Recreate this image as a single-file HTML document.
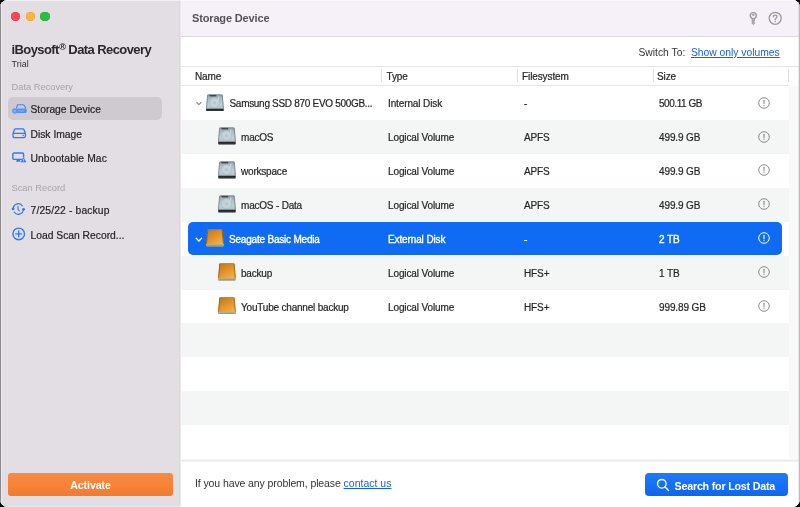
<!DOCTYPE html>
<html>
<head>
<meta charset="utf-8">
<title>iBoysoft Data Recovery</title>
<style>
*{box-sizing:border-box;margin:0;padding:0}
html,body{width:800px;height:507px;overflow:hidden;background:#000;}
body{font-family:"Liberation Sans",sans-serif;font-size:10px;color:#262626;position:relative;}
#win{position:absolute;left:0;top:0;width:800px;height:507px;border-radius:7.5px;overflow:hidden;background:#fff;will-change:transform;}
#sidebar{position:absolute;left:0;top:0;width:181px;height:507px;background:#e3dde4;border-left:1px solid #8d8a8e;border-right:1px solid #ebe7ec;box-shadow:inset -1px 0 0 #ddd7de, inset 1px 0 0 #ece7ed;}
#main{position:absolute;left:181px;top:0;width:618px;height:507px;background:#fff;}
#titlebar{position:absolute;left:0;top:0;width:618px;height:36px;background:#f6f1f8;}
#titlebar-line{position:absolute;left:0;top:36px;width:618px;height:1px;background:#dcd6dd;}
.tl{position:absolute;top:12px;width:9.3px;height:9.3px;border-radius:50%;}
.t{position:absolute;white-space:nowrap;line-height:12px;}
.apptitle{left:10.5px;top:42px;font-size:13px;font-weight:bold;color:#2a282b;line-height:16px;letter-spacing:-0.58px;}
.apptitle sup{font-size:9.5px;line-height:0;vertical-align:4.5px;}
.trial{left:10.5px;top:58px;font-size:9px;color:#333;}
.seclabel{font-size:9.3px;color:#a8a3a9;left:10.5px;}
.sel{position:absolute;left:7px;top:97px;width:154px;height:23px;border-radius:5px;background:#cfc9d0;}
.item{font-size:10.3px;color:#262426;left:29.5px;-webkit-text-stroke:0.2px currentColor;}
.ico{position:absolute;}
#activate{position:absolute;left:7px;top:473.4px;width:165px;height:23px;border-radius:3px;background:linear-gradient(#f78b45,#f47a2c);color:#fff;font-size:10.6px;font-weight:bold;text-align:center;line-height:24px;letter-spacing:-0.1px;}
.maintitle{left:11px;top:12px;font-size:11px;font-weight:bold;color:#545256;letter-spacing:-0.15px;}
.hline{position:absolute;left:0;height:1px;background:#e4e4e4;}
.row{position:absolute;left:0;width:608px;height:34px;}
.row.g{background:#f4f5f5;}
.hdr{font-size:10px;color:#262626;top:70.6px;letter-spacing:-0.1px;-webkit-text-stroke:0.2px currentColor;}
.vsep{position:absolute;top:69px;width:1px;height:13px;background:#dcdcdc;}
.c{position:absolute;white-space:nowrap;font-size:10px;line-height:12px;color:#262626;letter-spacing:-0.12px;-webkit-text-stroke:0.2px currentColor;}
.c.n{letter-spacing:-0.2px;}
.c.sz{letter-spacing:-0.12px;}
.selrow{position:absolute;left:7px;top:222px;width:594px;height:33px;border-radius:5px;background:#0f6bf3;}
.w{color:#fff !important;-webkit-text-stroke:0.35px #fff !important;}
.info{position:absolute;width:12px;height:12px;}
a{color:#1560e8;text-decoration:underline;}
#search{position:absolute;left:463.5px;top:473px;width:143.5px;height:23.4px;border-radius:4px;background:linear-gradient(#207af8,#0d66ee);color:#fff;font-size:11px;}
</style>
</head>
<body>
<div id="win">
  <div id="sidebar">
    <div class="tl" style="left:10.1px;background:#fd4655;box-shadow:inset 0 0 0 0.5px #e03a48"></div>
    <div class="tl" style="left:24.7px;background:#fcb43f;box-shadow:inset 0 0 0 0.5px #e0a030"></div>
    <div class="tl" style="left:39.3px;background:#27c13f;box-shadow:inset 0 0 0 0.5px #1faa34"></div>
    <div class="t apptitle">iBoysoft<sup>®</sup> Data Recovery</div>
    <div class="t trial">Trial</div>
    <div class="t seclabel" style="top:81px">Data Recovery</div>
    <div class="sel"></div>
    
<svg class="ico" style="left:9.7px;top:104px" width="17" height="11" viewBox="0 0 17 11"><path d="M5.4 4.6 L6.2 1.5 Q6.4 0.7 7.2 0.7 H12 Q12.8 0.7 13.2 1.4 L15 4.6" fill="none" stroke="#3f87f6" stroke-width="1.1"/><rect x="5.6" y="4.5" width="10.1" height="4.5" rx="1.5" fill="#4d90f5"/><rect x="7" y="5.7" width="6.5" height="2.2" rx="0.8" fill="#6aa3f6"/><circle cx="3.8" cy="7" r="2.7" fill="#5b99f5"/><circle cx="3.8" cy="7" r="1.3" fill="#7fb0f7"/></svg>
<svg class="ico" style="left:10.8px;top:127.8px" width="15" height="11" viewBox="0 0 15 11"><path d="M1 5.6 L2.5 1.6 Q2.8 0.8 3.7 0.8 H10.7 Q11.6 0.8 11.9 1.6 L13.4 5.6 V7.9 Q13.4 9.6 11.7 9.6 H2.7 Q1 9.6 1 7.9 Z" fill="none" stroke="#2b7bf6" stroke-width="1.3" stroke-linejoin="round"/><path d="M1.2 5.3H13.2" stroke="#2b7bf6" stroke-width="1.2"/><circle cx="11.2" cy="7.5" r="0.75" fill="#2b7bf6"/></svg>
<svg class="ico" style="left:11px;top:152px" width="16" height="11" viewBox="0 0 16 11"><rect x="0.8" y="1" width="10.8" height="6.4" rx="1.3" fill="none" stroke="#2b7bf6" stroke-width="1.4"/><path d="M5 7.8H7.6L8.8 9.7H3.8Z" fill="#2b7bf6"/><path d="M11.5 5.2 L14.7 10.4 H8.3 Z" fill="#e3dde4"/><path d="M11.5 6.1 L14 10 H9 Z" fill="#2b7bf6" stroke="#2b7bf6" stroke-width="0.6" stroke-linejoin="round"/><path d="M11.5 7.3V8.6" stroke="#fff" stroke-width="0.7"/><circle cx="11.5" cy="9.4" r="0.35" fill="#fff"/></svg>
<svg class="ico" style="left:9.8px;top:201.8px" width="15" height="14" viewBox="0 0 15 14"><path d="M2.3 6.2 A5 5 0 0 1 11.6 4.2" fill="none" stroke="#2b7bf6" stroke-width="1.2"/><path d="M12.3 7.8 A5 5 0 0 1 3 9.8" fill="none" stroke="#2b7bf6" stroke-width="1.2"/><circle cx="2.1" cy="6.9" r="1.4" fill="#2b7bf6"/><circle cx="12.6" cy="7.3" r="1.4" fill="#2b7bf6"/><path d="M7 4.2V7.4L8.3 8.9" fill="none" stroke="#2b7bf6" stroke-width="1.1" stroke-linecap="round"/></svg>
<svg class="ico" style="left:11px;top:226.5px" width="14" height="14" viewBox="0 0 14 14"><circle cx="6.7" cy="6.9" r="5.8" fill="none" stroke="#2b7bf6" stroke-width="1.4"/><path d="M6.7 4V9.8M3.8 6.9H9.6" stroke="#2b7bf6" stroke-width="1.4" stroke-linecap="round"/></svg>

    <div class="t item" style="top:104px">Storage Device</div>
    <div class="t item" style="top:128.5px">Disk Image</div>
    <div class="t item" style="top:153px;letter-spacing:0.1px">Unbootable Mac</div>
    <div class="t seclabel" style="top:182px">Scan Record</div>
    <div class="t item" style="top:205px;letter-spacing:0.15px">7/25/22 - backup</div>
    <div class="t item" style="top:229.5px">Load Scan Record...</div>
    <div id="activate">Activate</div>
  </div>
  <div id="main">
    <div id="titlebar"></div>
    <div id="titlebar-line"></div>
    <div class="t maintitle">Storage Device</div>
    <svg class="ico" style="left:567px;top:11px" width="10" height="15" viewBox="0 0 10 15"><circle cx="5.3" cy="4.6" r="3" fill="none" stroke="#9c999d" stroke-width="1.4"/><circle cx="5.3" cy="3.9" r="1.1" fill="#9c999d"/><path d="M4.2 7.4V12.4L5.3 13.6L6.4 12.4V11.4L5.7 10.8L6.4 10.1V7.4" fill="#b5b2b6" stroke="#9c999d" stroke-width="1"/></svg>
    <svg class="ico" style="left:587px;top:11px" width="15" height="15" viewBox="0 0 15 15"><circle cx="7.2" cy="7.3" r="6" fill="none" stroke="#9c999d" stroke-width="1.3"/><path d="M5.4 5.7Q5.4 4.1 7.2 4.1Q9 4.1 9 5.6Q9 6.6 8 7.2Q7.2 7.7 7.2 8.7" fill="none" stroke="#9c999d" stroke-width="1.3" stroke-linecap="round"/><circle cx="7.2" cy="10.4" r="0.75" fill="#9c999d"/></svg>
    <div class="t" style="left:457.5px;top:47px;font-size:10.3px;color:#333">Switch To:</div>
    <div class="t" style="left:510px;top:47px;font-size:10.3px;"><a>Show only volumes</a></div>
    <div class="hline" style="top:66px;width:618px"></div>
    <div class="t hdr" style="left:14px">Name</div>
    <div class="t hdr" style="left:205.5px">Type</div>
    <div class="t hdr" style="left:341px">Filesystem</div>
    <div class="t hdr" style="left:476px">Size</div>
    <div class="vsep" style="left:200px"></div>
    <div class="vsep" style="left:336px"></div>
    <div class="vsep" style="left:472px"></div>
    <div class="vsep" style="left:607px"></div>
    <div class="hline" style="top:85px;width:608px"></div>
    <div style="position:absolute;left:608px;top:86px;width:10px;height:374px;background:#f9f9f9"></div>
    <svg width="0" height="0" style="position:absolute"><defs>
<linearGradient id="gInt" x1="0" y1="0" x2="0" y2="1"><stop offset="0" stop-color="#7d8d95"/><stop offset="0.12" stop-color="#9aabb3"/><stop offset="0.35" stop-color="#b2c3cb"/><stop offset="0.6" stop-color="#bfcfd6"/><stop offset="1" stop-color="#a3b7c0"/></linearGradient>
<linearGradient id="gExt" x1="0.2" y1="0" x2="0.8" y2="1"><stop offset="0" stop-color="#c27a1d"/><stop offset="0.5" stop-color="#e4962e"/><stop offset="1" stop-color="#fdb840"/></linearGradient>
<linearGradient id="gBand" x1="0" y1="0" x2="0" y2="1"><stop offset="0" stop-color="#6a7276"/><stop offset="0.3" stop-color="#232527"/><stop offset="1" stop-color="#3c4043"/></linearGradient>
<linearGradient id="gBandE" x1="0" y1="0" x2="0" y2="1"><stop offset="0" stop-color="#bdb798"/><stop offset="1" stop-color="#8e8c7c"/></linearGradient>


</defs></svg>
    <div class="row" style="top:86.0px"></div>
<div class="row g" style="top:119.9px"></div>
<div class="row" style="top:153.8px"></div>
<div class="row g" style="top:187.7px"></div>
<div class="row" style="top:221.6px"></div>
<div class="row g" style="top:255.5px"></div>
<div class="row" style="top:289.4px"></div>
<div class="row g" style="top:323.3px"></div>
<div class="row" style="top:357.2px"></div>
<div class="row g" style="top:391.1px"></div>
<div class="row" style="top:425.0px"></div>
<div class="selrow"></div>
<svg class="ico" style="left:14px;top:101.4px" width="8" height="6" viewBox="0 0 8 6"><path d="M1.7 1.5 L3.9 3.7 L6.1 1.5" fill="none" stroke="#8a8a8a" stroke-width="1.1" stroke-linecap="round" stroke-linejoin="round"/></svg>
<svg class="ico" style="left:25.2px;top:93.5px" width="17.9" height="17.6" viewBox="0 0 17.5 17.5" preserveAspectRatio="none"><path d="M2.2 0.3H15.3Q16 0.3 16.1 1L17.3 14.6V16.6Q17.3 17.3 16.6 17.3H0.9Q0.2 17.3 0.2 16.6V14.6L1.4 1Q1.5 0.3 2.2 0.3Z" fill="url(#gInt)"/><path d="M1.6 1L0.4 14.6M15.9 1L17.1 14.6" stroke="#6f7d84" stroke-width="0.8" fill="none"/><path d="M0.2 14.3H17.3V16.6Q17.3 17.3 16.6 17.3H0.9Q0.2 17.3 0.2 16.6Z" fill="url(#gBand)"/><rect x="3.4" y="0.9" width="6.6" height="1.5" fill="#3f474b"/><circle cx="8.3" cy="8.6" r="4.9" fill="#c3d3d9" stroke="#a9bbc3" stroke-width="0.7"/><circle cx="8.3" cy="8.6" r="2.1" fill="#b7c7ce" stroke="#cddadf" stroke-width="0.5"/><path d="M12.6 2.6Q13.2 5.5 10.6 7.6" stroke="#d9e4e8" stroke-width="0.9" fill="none"/></svg>
<svg class="info" style="left:576.5px;top:96.6px" viewBox="0 0 12 12"><circle cx="6" cy="6" r="5.3" fill="none" stroke="#8a8a8a" stroke-width="1"/><path d="M6 3.2V6.8" stroke="#8a8a8a" stroke-width="1.1" stroke-linecap="round"/><circle cx="6" cy="8.6" r="0.65" fill="#8a8a8a"/></svg>
<svg class="ico" style="left:36.8px;top:127.4px" width="17.9" height="17.6" viewBox="0 0 17.5 17.5" preserveAspectRatio="none"><path d="M2.2 0.3H15.3Q16 0.3 16.1 1L17.3 14.6V16.6Q17.3 17.3 16.6 17.3H0.9Q0.2 17.3 0.2 16.6V14.6L1.4 1Q1.5 0.3 2.2 0.3Z" fill="url(#gInt)"/><path d="M1.6 1L0.4 14.6M15.9 1L17.1 14.6" stroke="#6f7d84" stroke-width="0.8" fill="none"/><path d="M0.2 14.3H17.3V16.6Q17.3 17.3 16.6 17.3H0.9Q0.2 17.3 0.2 16.6Z" fill="url(#gBand)"/><rect x="3.4" y="0.9" width="6.6" height="1.5" fill="#3f474b"/><circle cx="8.3" cy="8.6" r="4.9" fill="#c3d3d9" stroke="#a9bbc3" stroke-width="0.7"/><circle cx="8.3" cy="8.6" r="2.1" fill="#b7c7ce" stroke="#cddadf" stroke-width="0.5"/><path d="M12.6 2.6Q13.2 5.5 10.6 7.6" stroke="#d9e4e8" stroke-width="0.9" fill="none"/></svg>
<svg class="info" style="left:576.5px;top:130.5px" viewBox="0 0 12 12"><circle cx="6" cy="6" r="5.3" fill="none" stroke="#8a8a8a" stroke-width="1"/><path d="M6 3.2V6.8" stroke="#8a8a8a" stroke-width="1.1" stroke-linecap="round"/><circle cx="6" cy="8.6" r="0.65" fill="#8a8a8a"/></svg>
<svg class="ico" style="left:36.8px;top:161.3px" width="17.9" height="17.6" viewBox="0 0 17.5 17.5" preserveAspectRatio="none"><path d="M2.2 0.3H15.3Q16 0.3 16.1 1L17.3 14.6V16.6Q17.3 17.3 16.6 17.3H0.9Q0.2 17.3 0.2 16.6V14.6L1.4 1Q1.5 0.3 2.2 0.3Z" fill="url(#gInt)"/><path d="M1.6 1L0.4 14.6M15.9 1L17.1 14.6" stroke="#6f7d84" stroke-width="0.8" fill="none"/><path d="M0.2 14.3H17.3V16.6Q17.3 17.3 16.6 17.3H0.9Q0.2 17.3 0.2 16.6Z" fill="url(#gBand)"/><rect x="3.4" y="0.9" width="6.6" height="1.5" fill="#3f474b"/><circle cx="8.3" cy="8.6" r="4.9" fill="#c3d3d9" stroke="#a9bbc3" stroke-width="0.7"/><circle cx="8.3" cy="8.6" r="2.1" fill="#b7c7ce" stroke="#cddadf" stroke-width="0.5"/><path d="M12.6 2.6Q13.2 5.5 10.6 7.6" stroke="#d9e4e8" stroke-width="0.9" fill="none"/></svg>
<svg class="info" style="left:576.5px;top:164.4px" viewBox="0 0 12 12"><circle cx="6" cy="6" r="5.3" fill="none" stroke="#8a8a8a" stroke-width="1"/><path d="M6 3.2V6.8" stroke="#8a8a8a" stroke-width="1.1" stroke-linecap="round"/><circle cx="6" cy="8.6" r="0.65" fill="#8a8a8a"/></svg>
<svg class="ico" style="left:36.8px;top:195.2px" width="17.9" height="17.6" viewBox="0 0 17.5 17.5" preserveAspectRatio="none"><path d="M2.2 0.3H15.3Q16 0.3 16.1 1L17.3 14.6V16.6Q17.3 17.3 16.6 17.3H0.9Q0.2 17.3 0.2 16.6V14.6L1.4 1Q1.5 0.3 2.2 0.3Z" fill="url(#gInt)"/><path d="M1.6 1L0.4 14.6M15.9 1L17.1 14.6" stroke="#6f7d84" stroke-width="0.8" fill="none"/><path d="M0.2 14.3H17.3V16.6Q17.3 17.3 16.6 17.3H0.9Q0.2 17.3 0.2 16.6Z" fill="url(#gBand)"/><rect x="3.4" y="0.9" width="6.6" height="1.5" fill="#3f474b"/><circle cx="8.3" cy="8.6" r="4.9" fill="#c3d3d9" stroke="#a9bbc3" stroke-width="0.7"/><circle cx="8.3" cy="8.6" r="2.1" fill="#b7c7ce" stroke="#cddadf" stroke-width="0.5"/><path d="M12.6 2.6Q13.2 5.5 10.6 7.6" stroke="#d9e4e8" stroke-width="0.9" fill="none"/></svg>
<svg class="info" style="left:576.5px;top:198.3px" viewBox="0 0 12 12"><circle cx="6" cy="6" r="5.3" fill="none" stroke="#8a8a8a" stroke-width="1"/><path d="M6 3.2V6.8" stroke="#8a8a8a" stroke-width="1.1" stroke-linecap="round"/><circle cx="6" cy="8.6" r="0.65" fill="#8a8a8a"/></svg>
<svg class="ico" style="left:14px;top:237.0px" width="8" height="6" viewBox="0 0 8 6"><path d="M1.2 1.3 L3.9 4 L6.6 1.3" fill="none" stroke="#fff" stroke-width="1.35" stroke-linecap="round" stroke-linejoin="round"/></svg>
<svg class="ico" style="left:25.2px;top:229.1px" width="17.9" height="17.6" viewBox="0 0 17.5 17.5" preserveAspectRatio="none"><path d="M2.2 0.3H15.3Q16 0.3 16.1 1L17.3 14.8V16.6Q17.3 17.3 16.6 17.3H0.9Q0.2 17.3 0.2 16.6V14.8L1.4 1Q1.5 0.3 2.2 0.3Z" fill="url(#gExt)"/><path d="M1.7 0.8L0.5 14.8M15.8 0.8L17 14.8" stroke="#96590a" stroke-width="0.8" fill="none"/><path d="M1.8 0.6H15.7" stroke="#b8771c" stroke-width="0.6"/><path d="M0.2 14.9H17.3V16.6Q17.3 17.3 16.6 17.3H0.9Q0.2 17.3 0.2 16.6Z" fill="url(#gBandE)"/></svg>
<svg class="info" style="left:576.5px;top:232.2px" viewBox="0 0 12 12"><circle cx="6" cy="6" r="5.3" fill="none" stroke="#fff" stroke-width="1"/><path d="M6 3.2V6.8" stroke="#fff" stroke-width="1.1" stroke-linecap="round"/><circle cx="6" cy="8.6" r="0.65" fill="#fff"/></svg>
<svg class="ico" style="left:36.8px;top:263.0px" width="17.9" height="17.6" viewBox="0 0 17.5 17.5" preserveAspectRatio="none"><path d="M2.2 0.3H15.3Q16 0.3 16.1 1L17.3 14.8V16.6Q17.3 17.3 16.6 17.3H0.9Q0.2 17.3 0.2 16.6V14.8L1.4 1Q1.5 0.3 2.2 0.3Z" fill="url(#gExt)"/><path d="M1.7 0.8L0.5 14.8M15.8 0.8L17 14.8" stroke="#96590a" stroke-width="0.8" fill="none"/><path d="M1.8 0.6H15.7" stroke="#b8771c" stroke-width="0.6"/><path d="M0.2 14.9H17.3V16.6Q17.3 17.3 16.6 17.3H0.9Q0.2 17.3 0.2 16.6Z" fill="url(#gBandE)"/></svg>
<svg class="info" style="left:576.5px;top:266.1px" viewBox="0 0 12 12"><circle cx="6" cy="6" r="5.3" fill="none" stroke="#8a8a8a" stroke-width="1"/><path d="M6 3.2V6.8" stroke="#8a8a8a" stroke-width="1.1" stroke-linecap="round"/><circle cx="6" cy="8.6" r="0.65" fill="#8a8a8a"/></svg>
<svg class="ico" style="left:36.8px;top:296.9px" width="17.9" height="17.6" viewBox="0 0 17.5 17.5" preserveAspectRatio="none"><path d="M2.2 0.3H15.3Q16 0.3 16.1 1L17.3 14.8V16.6Q17.3 17.3 16.6 17.3H0.9Q0.2 17.3 0.2 16.6V14.8L1.4 1Q1.5 0.3 2.2 0.3Z" fill="url(#gExt)"/><path d="M1.7 0.8L0.5 14.8M15.8 0.8L17 14.8" stroke="#96590a" stroke-width="0.8" fill="none"/><path d="M1.8 0.6H15.7" stroke="#b8771c" stroke-width="0.6"/><path d="M0.2 14.9H17.3V16.6Q17.3 17.3 16.6 17.3H0.9Q0.2 17.3 0.2 16.6Z" fill="url(#gBandE)"/></svg>
<svg class="info" style="left:576.5px;top:300.0px" viewBox="0 0 12 12"><circle cx="6" cy="6" r="5.3" fill="none" stroke="#8a8a8a" stroke-width="1"/><path d="M6 3.2V6.8" stroke="#8a8a8a" stroke-width="1.1" stroke-linecap="round"/><circle cx="6" cy="8.6" r="0.65" fill="#8a8a8a"/></svg>
<div style="position:absolute;left:0;top:0;"><div class="c n" style="left:48.5px;top:98.45px"><span style="letter-spacing:-0.3px">Samsung SSD 870 EVO 500GB...</span></div>
<div class="c" style="left:207px;top:98.45px">Internal Disk</div>
<div class="c" style="left:343px;top:98.45px">-</div>
<div class="c sz" style="left:478px;top:98.45px"><span style="letter-spacing:-0.45px">500.11 GB</span></div>
<div class="c n" style="left:60px;top:132.35px">macOS</div>
<div class="c" style="left:207px;top:132.35px">Logical Volume</div>
<div class="c" style="left:343px;top:132.35px">APFS</div>
<div class="c sz" style="left:478px;top:132.35px">499.9 GB</div>
<div class="c n" style="left:60px;top:166.25px">workspace</div>
<div class="c" style="left:207px;top:166.25px">Logical Volume</div>
<div class="c" style="left:343px;top:166.25px">APFS</div>
<div class="c sz" style="left:478px;top:166.25px">499.9 GB</div>
<div class="c n" style="left:60px;top:200.15px">macOS - Data</div>
<div class="c" style="left:207px;top:200.15px">Logical Volume</div>
<div class="c" style="left:343px;top:200.15px">APFS</div>
<div class="c sz" style="left:478px;top:200.15px">499.9 GB</div>
<div class="c n w" style="left:48px;top:234.05px">Seagate Basic Media</div>
<div class="c w" style="left:207px;top:234.05px">External Disk</div>
<div class="c w" style="left:343px;top:234.05px">-</div>
<div class="c sz w" style="left:478px;top:234.05px">2 TB</div>
<div class="c n" style="left:60px;top:267.95px">backup</div>
<div class="c" style="left:207px;top:267.95px">Logical Volume</div>
<div class="c" style="left:343px;top:267.95px">HFS+</div>
<div class="c sz" style="left:478px;top:267.95px">1 TB</div>
<div class="c n" style="left:60px;top:301.85px">YouTube channel backup</div>
<div class="c" style="left:207px;top:301.85px">Logical Volume</div>
<div class="c" style="left:343px;top:301.85px">HFS+</div>
<div class="c sz" style="left:478px;top:301.85px">999.89 GB</div></div>
    <div style="position:absolute;left:0;top:459px;width:618px;height:3px;background:linear-gradient(#fbfbfb,#e7eae9 55%,#f6f7f7)"></div>
    <div class="t" style="left:14px;top:476.5px;font-size:10.5px;color:#333;letter-spacing:-0.1px">If you have any problem, please <a style="letter-spacing:0">contact us</a></div>
    <div id="search"><svg class="ico" style="left:11px;top:5.3px" width="14" height="14" viewBox="0 0 14 14"><circle cx="5.8" cy="5.8" r="4.3" fill="none" stroke="#fff" stroke-width="1.3"/><path d="M9 9L12.6 12.6" stroke="#fff" stroke-width="1.4" stroke-linecap="round"/></svg><span class="t" style="left:30px;top:6.6px;font-weight:bold;font-size:10.7px;letter-spacing:-0.2px;">Search for Lost Data</span></div>
  </div>
  <div style="position:absolute;left:1px;top:0;width:799px;height:1px;background:rgba(255,255,255,0.55)"></div>
  <div style="position:absolute;left:1px;top:506px;width:180px;height:1px;background:rgba(255,255,255,0.45)"></div>
  <div style="position:absolute;left:798px;top:0;width:1px;height:507px;background:rgba(0,0,0,0.07)"></div>
  <div style="position:absolute;left:799px;top:0;width:1px;height:507px;background:#bcbcbc"></div>
</div>
</body>
</html>
